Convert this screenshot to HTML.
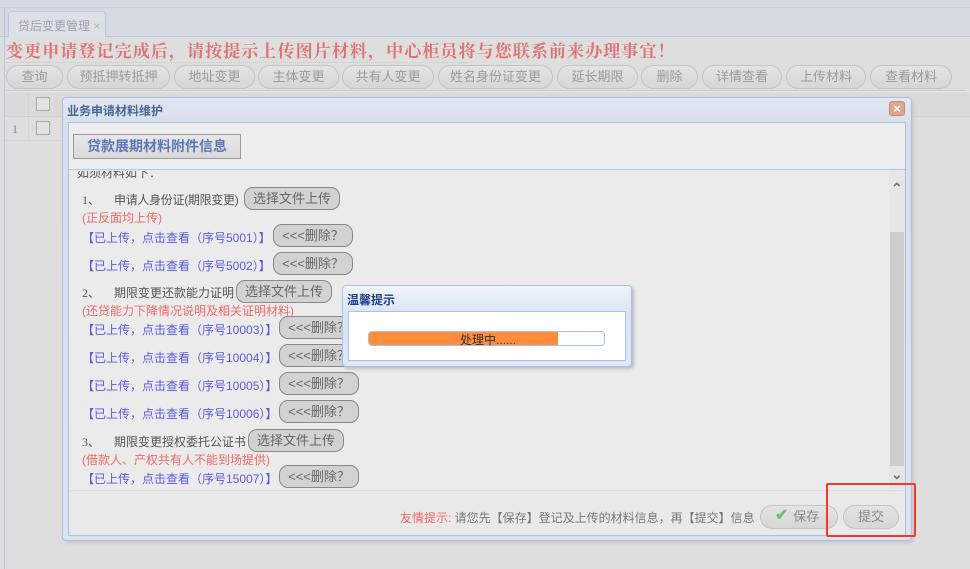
<!DOCTYPE html>
<html><head><meta charset="utf-8"><style>
*{margin:0;padding:0;box-sizing:border-box}
body{width:970px;height:569px;overflow:hidden;background:#dedede;font-family:"Liberation Sans","Noto Sans CJK SC",sans-serif;font-size:12px;position:relative;color:#555}
.a{position:absolute;white-space:nowrap}
.pill{position:absolute;height:24px;border:1px solid #c4c4c4;border-radius:12px;background:linear-gradient(#e4e4e4,#d6d6d6);color:#9a9a9a;font-size:13px;text-align:center;line-height:22px}
.gb{position:absolute;height:23px;border:1px solid #888;border-radius:9px;background:#d2d2d2;color:#666;font-size:13px;text-align:center;line-height:21px}
.lk{color:#5a5ae0;font-size:12px}
.rd{color:#ee6a6a;font-size:12px}
.tx{color:#555;font-size:12px}
.n{position:absolute;font-family:"Liberation Serif",serif;color:#555;font-size:12px}
</style></head><body>
<div class="a" style="left:0;top:0;width:970px;height:8px;background:#d6dae1;border-bottom:1px solid #c2cde0"></div>
<div class="a" style="left:0;top:8px;width:970px;height:29px;background:#d5d9e1;border-bottom:1px solid #b9c8df"></div>
<div class="a" style="left:4px;top:8px;width:1px;height:561px;background:#bcc8da"></div>
<div class="a" style="left:8px;top:11px;width:98px;height:26px;background:#dde1e7;border:1px solid #bccadf;border-bottom:none;border-radius:4px 4px 0 0;color:#9aa3b0;font-size:12px;padding:5px 0 0 9px">贷后变更管理 <span style="color:#b5b5b5">×</span></div>
<div class="a" style="left:6px;top:37px;font-family:'Noto Serif CJK SC',serif;font-weight:bold;font-size:17px;color:#e07272;letter-spacing:1.1px">变更申请登记完成后，请按提示上传图片材料，中心柜员将与您联系前来办理事宜！</div>
<div class="a" style="left:6px;top:62px;width:462px;height:1px;border-top:1px dotted #ccc"></div>
<div class="pill" style="left:6px;top:65px;width:57px">查询</div>
<div class="pill" style="left:67px;top:65px;width:103px">预抵押转抵押</div>
<div class="pill" style="left:174px;top:65px;width:81px">地址变更</div>
<div class="pill" style="left:258px;top:65px;width:81px">主体变更</div>
<div class="pill" style="left:342px;top:65px;width:92px">共有人变更</div>
<div class="pill" style="left:438px;top:65px;width:115px">姓名身份证变更</div>
<div class="pill" style="left:557px;top:65px;width:81px">延长期限</div>
<div class="pill" style="left:641px;top:65px;width:57px">删除</div>
<div class="pill" style="left:702px;top:65px;width:80px">详情查看</div>
<div class="pill" style="left:786px;top:65px;width:80px">上传材料</div>
<div class="pill" style="left:870px;top:65px;width:82px">查看材料</div>
<div class="a" style="left:6px;top:90px;width:960px;height:2px;border-top:1px solid #ccc;border-bottom:1px solid #e5e5e5"></div>
<div class="a" style="left:5px;top:93px;width:965px;height:24px;background:#dadada;border-bottom:1px solid #cfcfcf"></div>
<div class="a" style="left:36px;top:97px;width:14px;height:14px;border:1px solid #aaa;background:#e2e2e2"></div>
<div class="a" style="left:28px;top:93px;height:48px;border-left:1px dotted #ccc"></div>
<div class="a" style="left:12px;top:122px;color:#888;font-family:'Liberation Serif',serif">1</div>
<div class="a" style="left:36px;top:121px;width:14px;height:14px;border:1px solid #aaa;background:#e2e2e2"></div>
<div class="a" style="left:5px;top:140px;width:60px;border-top:1px dotted #ccc"></div>
<!-- dialog -->
<div class="a" style="left:62px;top:97px;width:850px;height:444px;background:linear-gradient(#e2e7f0,#d8dfec 25px,#dde3ee);border:1px solid #aac0df;border-radius:4px;box-shadow:2px 2px 3px #c8c8c8"></div>
<div class="a" style="left:67px;top:102px;font-weight:bold;font-size:12px;color:#4a6694">业务申请材料维护</div>
<div class="a" style="left:889px;top:101px;width:16px;height:15px;background:#e0a58f;border:1px solid #c98a75;border-radius:3px;color:#fff;font-size:13px;font-weight:bold;line-height:13px;text-align:center">×</div>
<div class="a" style="left:68px;top:122px;width:838px;height:414px;background:#e9e9e9;border:1px solid #aac0df"></div>
<div class="a" style="left:69px;top:123px;width:836px;height:47px;background:#ededed;border-bottom:1px solid #b4c6e0"></div>
<div class="a" style="left:73px;top:134px;width:168px;height:25px;background:linear-gradient(#e8e8e8,#d9d9d9);border:1px solid #9a9a9a;color:#5b78b8;font-weight:bold;font-size:14px;line-height:23px;text-align:center">贷款展期材料附件信息</div>
<div class="a" style="left:69px;top:171px;width:836px;height:319px;overflow:hidden;background:#ebebeb">
 <div class="a tx" style="left:8px;top:-7px">如须材料如下：</div>
</div>
<div class="a" style="left:889px;top:171px;width:16px;height:318px;background:#e6e6e6"></div>
<div class="a" style="left:890px;top:232px;width:14px;height:234px;background:#cdcdcd"></div>
<div class="a" style="left:891px;top:180px;color:#777;font-size:14px;font-weight:bold">&#8963;</div>
<div class="a" style="left:891px;top:466px;color:#777;font-size:14px;font-weight:bold">&#8964;</div>
<div class="a" style="left:69px;top:490px;width:836px;height:1px;background:#dedede"></div>

<div class="n" style="left:82px;top:191px">1、</div><div class="a tx" style="left:114px;top:191px;letter-spacing:-0.3px">申请人身份证(期限变更)</div>
<div class="gb" style="left:244px;top:187px;width:96px">选择文件上传</div>
<div class="a rd" style="left:82px;top:209px">(正反面均上传)</div>
<div class="a lk" style="left:82px;top:229px">【已上传，点击查看（序号5001）】</div>
<div class="gb" style="left:273px;top:224px;width:80px">&lt;&lt;&lt;删除？</div>
<div class="a lk" style="left:82px;top:257px">【已上传，点击查看（序号5002）】</div>
<div class="gb" style="left:273px;top:252px;width:80px">&lt;&lt;&lt;删除？</div>
<div class="n" style="left:82px;top:284px">2、</div><div class="a tx" style="left:114px;top:284px">期限变更还款能力证明</div>
<div class="gb" style="left:236px;top:280px;width:96px">选择文件上传</div>
<div class="a rd" style="left:82px;top:302px">(还贷能力下降情况说明及相关证明材料)</div>
<div class="a lk" style="left:82px;top:321px">【已上传，点击查看（序号10003）】</div>
<div class="gb" style="left:279px;top:316px;width:80px">&lt;&lt;&lt;删除？</div>
<div class="a lk" style="left:82px;top:349px">【已上传，点击查看（序号10004）】</div>
<div class="gb" style="left:279px;top:344px;width:80px">&lt;&lt;&lt;删除？</div>
<div class="a lk" style="left:82px;top:377px">【已上传，点击查看（序号10005）】</div>
<div class="gb" style="left:279px;top:372px;width:80px">&lt;&lt;&lt;删除？</div>
<div class="a lk" style="left:82px;top:405px">【已上传，点击查看（序号10006）】</div>
<div class="gb" style="left:279px;top:400px;width:80px">&lt;&lt;&lt;删除？</div>
<div class="n" style="left:82px;top:433px">3、</div><div class="a tx" style="left:114px;top:433px">期限变更授权委托公证书</div>
<div class="gb" style="left:248px;top:429px;width:96px">选择文件上传</div>
<div class="a rd" style="left:82px;top:451px">(借款人、产权共有人不能到场提供)</div>
<div class="a lk" style="left:82px;top:470px">【已上传，点击查看（序号15007）】</div>
<div class="gb" style="left:279px;top:465px;width:80px">&lt;&lt;&lt;删除？</div>

<div class="a" style="left:400px;top:509px;font-size:12px;color:#777"><span style="color:#ee6a6a">友情提示:</span> 请您先【保存】登记及上传的材料信息，再【提交】信息</div>
<div class="pill" style="left:760px;top:505px;width:78px;color:#888">&nbsp;&nbsp;&nbsp;&nbsp;保存</div>
<div class="a" style="left:775px;top:505px;color:#6cc070;font-size:16px;font-weight:bold">✔</div>
<div class="pill" style="left:843px;top:505px;width:56px;color:#888">提交</div>
<div class="a" style="left:826px;top:483px;width:90px;height:54px;border:2px solid #f03a2e;border-radius:2px"></div>

<!-- loading -->
<div class="a" style="left:342px;top:285px;width:290px;height:82px;background:linear-gradient(#f0f4fb,#d9e4f6 28px,#dfe8f6);border:1px solid #a9c1e5;border-radius:4px;box-shadow:2px 2px 3px #bbb"></div>
<div class="a" style="left:347px;top:291px;font-weight:bold;font-size:12px;color:#1f3f86">温馨提示</div>
<div class="a" style="left:348px;top:311px;width:278px;height:50px;background:#fff;border:1px solid #a9c1e5"></div>
<div class="a" style="left:368px;top:331px;width:237px;height:15px;border:1px solid #a9c1e5;border-radius:4px;background:#fff;overflow:hidden"><div style="width:189px;height:100%;background:#ff8d3c"></div></div>
<div class="a" style="left:460px;top:331px;font-size:12px;color:#333">处理中......</div>
</body></html>
